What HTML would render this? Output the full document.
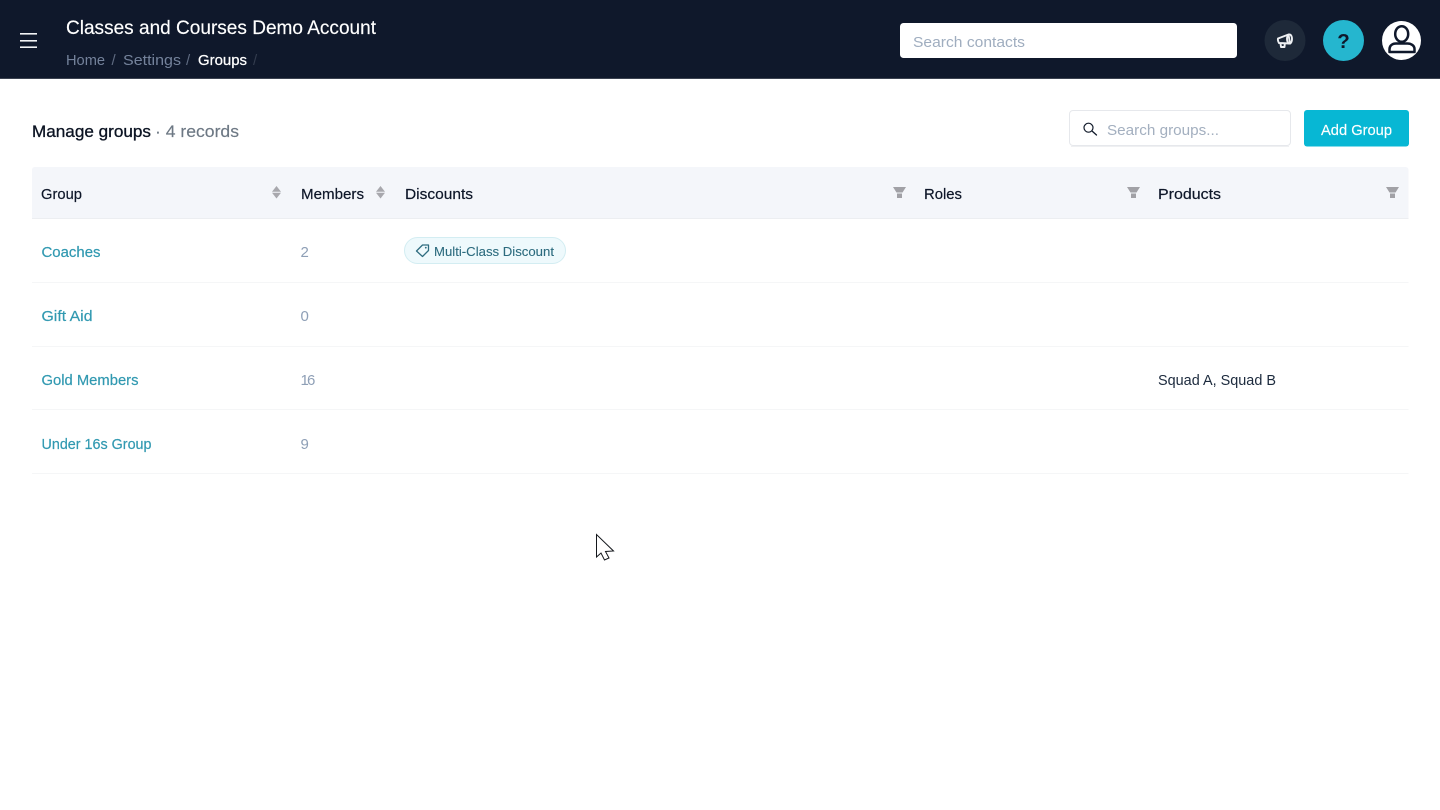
<!DOCTYPE html>
<html lang="en"><head><meta charset="utf-8"><title>Groups</title>
<style>
html,body{margin:0;padding:0;background:#fff;width:1440px;height:810px;overflow:hidden}
svg{display:block}
text{font-family:"Liberation Sans",sans-serif;white-space:pre}
</style></head><body>
<svg width="1440" height="810" viewBox="0 0 1440 810" xmlns="http://www.w3.org/2000/svg">
<rect width="1440" height="810" fill="#fff"/>
<rect width="1440" height="78" fill="#0f182b"/>
<rect y="78" width="1440" height="1" fill="#3b4250"/>
<!-- hamburger -->
<g fill="#f2f3f5"><rect x="20" y="33" width="17" height="1.6"/><rect x="20" y="40" width="17" height="1.6"/><rect x="20" y="46.400" width="17" height="1.6"/></g>
<text x="66" y="34" font-size="19.500" fill="#fff" stroke="#fff" stroke-width=".15" textLength="310" lengthAdjust="spacingAndGlyphs">Classes and Courses Demo Account</text>
<g font-size="15" fill="#74829b">
<text x="66" y="65" textLength="39" lengthAdjust="spacingAndGlyphs">Home</text>
<text x="111.500" y="65" fill="#5f6b81">/</text>
<text x="123" y="65" textLength="58" lengthAdjust="spacingAndGlyphs">Settings</text>
<text x="186" y="65" fill="#5f6b81">/</text>
<text x="198" y="65" fill="#fff" stroke="#fff" stroke-width=".25" textLength="49" lengthAdjust="spacingAndGlyphs">Groups</text>
<text x="253" y="65" fill="#333c4e">/</text>
</g>
<!-- header search -->
<rect x="900" y="23" width="337" height="35" rx="3.500" fill="#fff"/>
<text x="913" y="47" font-size="15" fill="#9fadbf" textLength="112" lengthAdjust="spacingAndGlyphs">Search contacts</text>
<!-- megaphone -->
<circle cx="1285" cy="40.500" r="20.500" fill="#1e2939"/>
<g fill="none" stroke="#eef0f3" stroke-width="1.900" stroke-linejoin="round" stroke-linecap="round">
<path d="M1278 38.500 L1288.500 34.500 L1290 43.500 L1279 43 Q1277.500 40.500 1278 38.500 Z"/>
<ellipse cx="1289.500" cy="39" rx="2.500" ry="4.600"/>
<path d="M1280.500 43.500 L1281 47 L1284.500 47 L1284.800 43.500"/>
</g>
<!-- help -->
<circle cx="1343.500" cy="40.500" r="20.500" fill="#25b6cf"/>
<text x="1343.500" y="48" font-size="20.500" font-weight="bold" fill="#0f182b" text-anchor="middle">?</text>
<!-- avatar -->
<circle cx="1401.500" cy="40.500" r="19.500" fill="#fff"/>
<g fill="none" stroke="#0f182b" stroke-width="2.500">
<ellipse cx="1401.700" cy="34" rx="6.500" ry="7.800"/>
<path d="M1389.500 52 V49 C1389.500 45.500 1392.500 43.500 1396 43.500 H1407.500 C1411 43.500 1414.500 45.500 1414.500 49 V52 Z" stroke-linejoin="round"/>
</g>
<!-- heading -->
<text x="32" y="137" font-size="16.500" fill="#0b1322" stroke="#0b1322" stroke-width=".3" textLength="119" lengthAdjust="spacingAndGlyphs">Manage groups</text>
<text x="155" y="137" font-size="16.500" fill="#6d7884" stroke="#6d7884" stroke-width=".15" textLength="84" lengthAdjust="spacingAndGlyphs">· 4 records</text>
<!-- groups search -->
<rect x="1069.500" y="110.500" width="221" height="35" rx="3.500" fill="#fff" stroke="#e6e8ec"/>
<rect x="1071" y="146" width="218" height="1" fill="#eff0f2"/>
<circle cx="1088.500" cy="127.700" r="4.500" fill="none" stroke="#111a2a" stroke-width="1.200"/>
<path d="M1092 131 L1096.500 135" stroke="#111a2a" stroke-width="1.300" stroke-linecap="round"/>
<text x="1107" y="135" font-size="15" fill="#a3afbf" textLength="112" lengthAdjust="spacingAndGlyphs">Search groups...</text>
<rect x="1304" y="110" width="105" height="36.500" rx="3" fill="#07b7d4"/>
<text x="1321" y="135" font-size="15" fill="#fff" stroke="#fff" stroke-width=".15" textLength="71" lengthAdjust="spacingAndGlyphs">Add Group</text>
<!-- table header -->
<path d="M35 167 H1405 Q1408.500 167 1408.500 170 V218 H32 V170 Q32 167 35 167 Z" fill="#f4f6fa"/>
<rect x="32" y="218" width="1376.500" height="1" fill="#eceef1"/>
<g font-size="15" fill="#0e1729" stroke="#0e1729" stroke-width=".2">
<text x="41" y="199" textLength="41" lengthAdjust="spacingAndGlyphs">Group</text>
<text x="301" y="199" textLength="63" lengthAdjust="spacingAndGlyphs">Members</text>
<text x="405" y="199" textLength="68" lengthAdjust="spacingAndGlyphs">Discounts</text>
<text x="924" y="199" textLength="38" lengthAdjust="spacingAndGlyphs">Roles</text>
<text x="1158" y="199" textLength="63" lengthAdjust="spacingAndGlyphs">Products</text>
</g>
<!-- sort icons -->
<g fill="#a8a8ad">
<path d="M272 191.800 L276.500 186 L281 191.800 Z"/><path d="M272 192.800 L276.500 198.500 L281 192.800 Z"/>
<path d="M376 191.800 L380.500 186 L385 191.800 Z"/><path d="M376 192.800 L380.500 198.500 L385 192.800 Z"/>
</g>
<!-- filter icons -->
<g fill="#a1a1a6">
<path d="M893 187 H906 L902.500 192.500 H896.500 Z"/><rect x="897" y="193.500" width="5" height="4.500"/>
<path d="M1127 187 H1140 L1136.500 192.500 H1130.500 Z"/><rect x="1131" y="193.500" width="5" height="4.500"/>
<path d="M1386 187 H1399 L1395.500 192.500 H1389.500 Z"/><rect x="1390" y="193.500" width="5" height="4.500"/>
</g>
<!-- row lines -->
<g fill="#f5f6f7">
<rect x="32" y="282" width="1376.500" height="1"/>
<rect x="32" y="346" width="1376.500" height="1"/>
<rect x="32" y="409" width="1376.500" height="1"/>
<rect x="32" y="473" width="1376.500" height="1"/>
</g>
<!-- rows -->
<g font-size="15" fill="#3199b1" stroke="#3199b1" stroke-width=".2">
<text x="41.500" y="257" textLength="59" lengthAdjust="spacingAndGlyphs">Coaches</text>
<text x="41.500" y="321" textLength="51" lengthAdjust="spacingAndGlyphs">Gift Aid</text>
<text x="41.500" y="385" textLength="97" lengthAdjust="spacingAndGlyphs">Gold Members</text>
<text x="41.500" y="449" textLength="110" lengthAdjust="spacingAndGlyphs">Under 16s Group</text>
</g>
<g font-size="15" fill="#8e9fb6">
<text x="300.500" y="257">2</text>
<text x="300.500" y="321">0</text>
<text x="300.500" y="385" letter-spacing="-1.800">16</text>
<text x="300.500" y="449">9</text>
</g>
<text x="1158" y="385" font-size="15" fill="#1c2a3d" textLength="118" lengthAdjust="spacingAndGlyphs">Squad A, Squad B</text>
<!-- badge -->
<rect x="404.500" y="237.500" width="161" height="26" rx="13" fill="#eef9fc" stroke="#d3edf2"/>
<path d="M416.500 251 L422.500 245 L428.500 245 L428.500 250.500 L422.500 256.500 Z" fill="none" stroke="#2f6d80" stroke-width="1.300" stroke-linejoin="round"/>
<circle cx="425.800" cy="247.700" r=".9" fill="#2f6d80"/>
<text x="434" y="256" font-size="13" fill="#2c6b7e" stroke="#2c6b7e" stroke-width=".1" textLength="120" lengthAdjust="spacingAndGlyphs">Multi-Class Discount</text>
<!-- cursor -->
<path d="M596.500 534.500 V557 L601 553 L604.500 560 L609 558 L605.500 551.500 L613.500 551 Z" fill="#fff" stroke="#14171c" stroke-width="1" stroke-linejoin="miter"/>
</svg>
</body></html>
